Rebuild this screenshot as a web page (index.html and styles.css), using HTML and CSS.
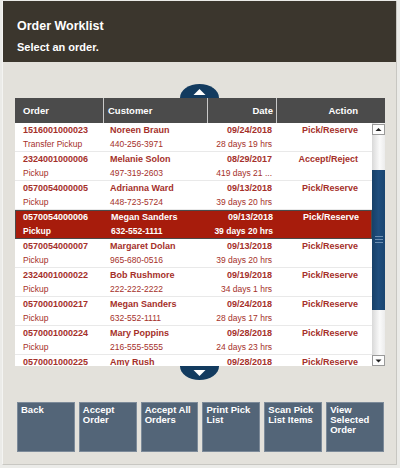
FILE: index.html
```html
<!DOCTYPE html>
<html>
<head>
<meta charset="utf-8">
<link rel="stylesheet" href="styles.css">
</head>
<body>
<div class="app">
  <div class="header">
    <div class="title">Order Worklist</div>
    <div class="subtitle">Select an order.</div>
  </div>
  <div class="main">
    <div class="arrow up"><svg width="39" height="14" viewBox="0 0 39 14"><polygon points="13.5,11 25.5,11 19.5,5" fill="#fff"/></svg></div>
    <div class="table">
      <div class="thead">
        <div class="th c-order">Order</div>
        <div class="th c-cust">Customer</div>
        <div class="th c-date">Date</div>
        <div class="th c-action">Action</div>
      </div>
      <div class="tbody">
        <div class="rows">
          <div class="row">
            <div class="td c-order"><b>1516001000023</b><span>Transfer Pickup</span></div>
            <div class="td c-cust"><b>Noreen Braun</b><span>440-256-3971</span></div>
            <div class="td c-date"><b>09/24/2018</b><span>28 days 19 hrs</span></div>
            <div class="td c-action"><b>Pick/Reserve</b></div>
          </div>
          <div class="row">
            <div class="td c-order"><b>2324001000006</b><span>Pickup</span></div>
            <div class="td c-cust"><b>Melanie Solon</b><span>497-319-2603</span></div>
            <div class="td c-date"><b>08/29/2017</b><span>419 days 21 ...</span></div>
            <div class="td c-action"><b>Accept/Reject</b></div>
          </div>
          <div class="row">
            <div class="td c-order"><b>0570054000005</b><span>Pickup</span></div>
            <div class="td c-cust"><b>Adrianna Ward</b><span>448-723-5724</span></div>
            <div class="td c-date"><b>09/13/2018</b><span>39 days 20 hrs</span></div>
            <div class="td c-action"><b>Pick/Reserve</b></div>
          </div>
          <div class="row selected">
            <div class="td c-order"><b>0570054000006</b><b>Pickup</b></div>
            <div class="td c-cust"><b>Megan Sanders</b><b>632-552-1111</b></div>
            <div class="td c-date"><b>09/13/2018</b><b>39 days 20 hrs</b></div>
            <div class="td c-action"><b>Pick/Reserve</b></div>
          </div>
          <div class="row">
            <div class="td c-order"><b>0570054000007</b><span>Pickup</span></div>
            <div class="td c-cust"><b>Margaret Dolan</b><span>965-680-0516</span></div>
            <div class="td c-date"><b>09/13/2018</b><span>39 days 20 hrs</span></div>
            <div class="td c-action"><b>Pick/Reserve</b></div>
          </div>
          <div class="row">
            <div class="td c-order"><b>2324001000022</b><span>Pickup</span></div>
            <div class="td c-cust"><b>Bob Rushmore</b><span>222-222-2222</span></div>
            <div class="td c-date"><b>09/19/2018</b><span>34 days 1 hrs</span></div>
            <div class="td c-action"><b>Pick/Reserve</b></div>
          </div>
          <div class="row">
            <div class="td c-order"><b>0570001000217</b><span>Pickup</span></div>
            <div class="td c-cust"><b>Megan Sanders</b><span>632-552-1111</span></div>
            <div class="td c-date"><b>09/24/2018</b><span>28 days 17 hrs</span></div>
            <div class="td c-action"><b>Pick/Reserve</b></div>
          </div>
          <div class="row">
            <div class="td c-order"><b>0570001000224</b><span>Pickup</span></div>
            <div class="td c-cust"><b>Mary Poppins</b><span>216-555-5555</span></div>
            <div class="td c-date"><b>09/28/2018</b><span>24 days 23 hrs</span></div>
            <div class="td c-action"><b>Pick/Reserve</b></div>
          </div>
          <div class="row partial">
            <div class="td c-order"><b>0570001000225</b></div>
            <div class="td c-cust"><b>Amy Rush</b></div>
            <div class="td c-date"><b>09/28/2018</b></div>
            <div class="td c-action"><b>Pick/Reserve</b></div>
          </div>
        </div>
        <div class="scrollbar">
          <div class="sb-btn"><svg width="11" height="9" viewBox="0 0 11 9"><polygon points="2.5,6 8.5,6 5.5,3" fill="#222"/></svg></div>
          <div class="sb-track">
            <div class="sb-thumb"><div class="grip"></div></div>
          </div>
          <div class="sb-btn"><svg width="11" height="9" viewBox="0 0 11 9"><polygon points="2.5,3.5 8.5,3.5 5.5,6.5" fill="#222"/></svg></div>
        </div>
      </div>
    </div>
    <div class="arrow down"><svg width="39" height="14" viewBox="0 0 39 14"><polygon points="13.5,4 25.5,4 19.5,10" fill="#fff"/></svg></div>
    <div class="buttons">
      <div class="btn">Back</div>
      <div class="btn">Accept Order</div>
      <div class="btn">Accept All Orders</div>
      <div class="btn">Print Pick List</div>
      <div class="btn">Scan Pick List Items</div>
      <div class="btn">View Selected Order</div>
    </div>
  </div>
</div>
</body>
</html>
```

FILE: styles.css
```css
html, body {
  margin: 0;
  padding: 0;
  background: #ebebe8;
}
body {
  font-family: "Liberation Sans", Arial, sans-serif;
}
.app {
  margin: 1px 0 0 2px;
  width: 395px;
  height: 464px;
  background: #e3e1db;
  border-right: 1px solid #c8c7c2;
  border-bottom: 1px solid #c8c7c2;
  border-left: 1px solid #f4f4f2;
  box-sizing: border-box;
  display: flex;
  flex-direction: column;
}
.header {
  height: 61px;
  background: #3b362d;
  color: #fff;
  font-weight: bold;
  padding-left: 14px;
  box-sizing: border-box;
  padding-top: 17px;
}
.title {
  font-size: 12.5px;
  line-height: 16px;
}
.subtitle {
  font-size: 11px;
  line-height: 14px;
  margin-top: 6px;
}
.main {
  padding: 22px 0 0 12px;
}
.arrow {
  width: 39px;
  height: 14px;
  background: #133b5f;
  margin: 0 0 0 165px;
}
.arrow svg {
  display: block;
}
.arrow.up {
  border-radius: 20px 20px 0 0 / 14px 14px 0 0;
}
.arrow.down {
  border-radius: 0 0 20px 20px / 0 0 14px 14px;
}
.table {
  width: 370px;
}
.thead {
  display: grid;
  grid-template-columns: 89px 104px 69px 108px;
  height: 25px;
  background: #4b4b4b;
  color: #fff;
  font-size: 9.5px;
  font-weight: bold;
}
.th {
  display: flex;
  align-items: center;
  border-right: 1px solid #c9c9c9;
}
.th:last-child {
  border-right: none;
}
.th.c-order { padding-left: 8px; }
.th.c-cust { padding-left: 4px; }
.th.c-date { justify-content: flex-end; padding-right: 3px; }
.th.c-action { justify-content: flex-end; padding-right: 27px; }
.tbody {
  display: flex;
  height: 243px;
  background: #fff;
  overflow: hidden;
}
.rows {
  width: 357px;
}
.row {
  display: grid;
  grid-template-columns: 89px 104px 69px 95px;
  height: 29px;
  box-sizing: border-box;
  border-bottom: 1px solid #e9e9e9;
  color: #a5302a;
}
.row.partial {
  height: 11px;
  border-bottom: none;
  overflow: hidden;
}
.row.selected {
  background: #a71c0c;
  color: #fff;
  border: 1px solid #4a4a4a;
}
.td {
  display: flex;
  flex-direction: column;
  white-space: nowrap;
  overflow: hidden;
}
.row.partial .td {
  overflow: visible;
}
.td b {
  font-size: 9px;
  line-height: 14px;
}
.td span {
  font-size: 8.5px;
  line-height: 14px;
}
.row.selected .td b + b {
  font-size: 8.5px;
}
.td.c-order { padding-left: 8px; }
.td.c-cust { padding-left: 6px; }
.td.c-date { align-items: flex-end; padding-right: 5px; }
.td.c-action { align-items: flex-end; padding-right: 14px; }
.row.selected .td { margin-top: -1px; }
.row.selected .td.c-order { padding-left: 7px; }
.scrollbar {
  width: 13px;
  display: flex;
  flex-direction: column;
  background: linear-gradient(to right, #d9d9d9, #fafafa 60%, #ececec);
}
.sb-btn {
  height: 11px;
  box-sizing: border-box;
  border: 1px solid #9a9a9a;
  background: #fdfdfd;
  display: flex;
  align-items: center;
  justify-content: center;
}
.sb-btn:first-child { margin-top: 1px; }
.sb-btn svg { display: block; }
.sb-track {
  flex: 1;
  padding-top: 35px;
}
.sb-thumb {
  height: 140px;
  background: linear-gradient(to right, #174068, #1f4e7e 50%, #1a4570);
  display: flex;
  align-items: center;
  justify-content: center;
}
.grip {
  width: 8px;
  height: 9px;
  background: repeating-linear-gradient(to bottom, #6d8fb2 0 1px, transparent 1px 3px);
}
.buttons {
  display: flex;
  gap: 4px;
  width: 367px;
  margin: 22px 0 0 2px;
}
.btn {
  flex: 1;
  height: 50px;
  box-sizing: border-box;
  background: #536578;
  border: 1px solid #7c8a99;
  color: #fff;
  font-size: 9.5px;
  font-weight: bold;
  line-height: 10px;
  padding: 2px 3px;
}
```
